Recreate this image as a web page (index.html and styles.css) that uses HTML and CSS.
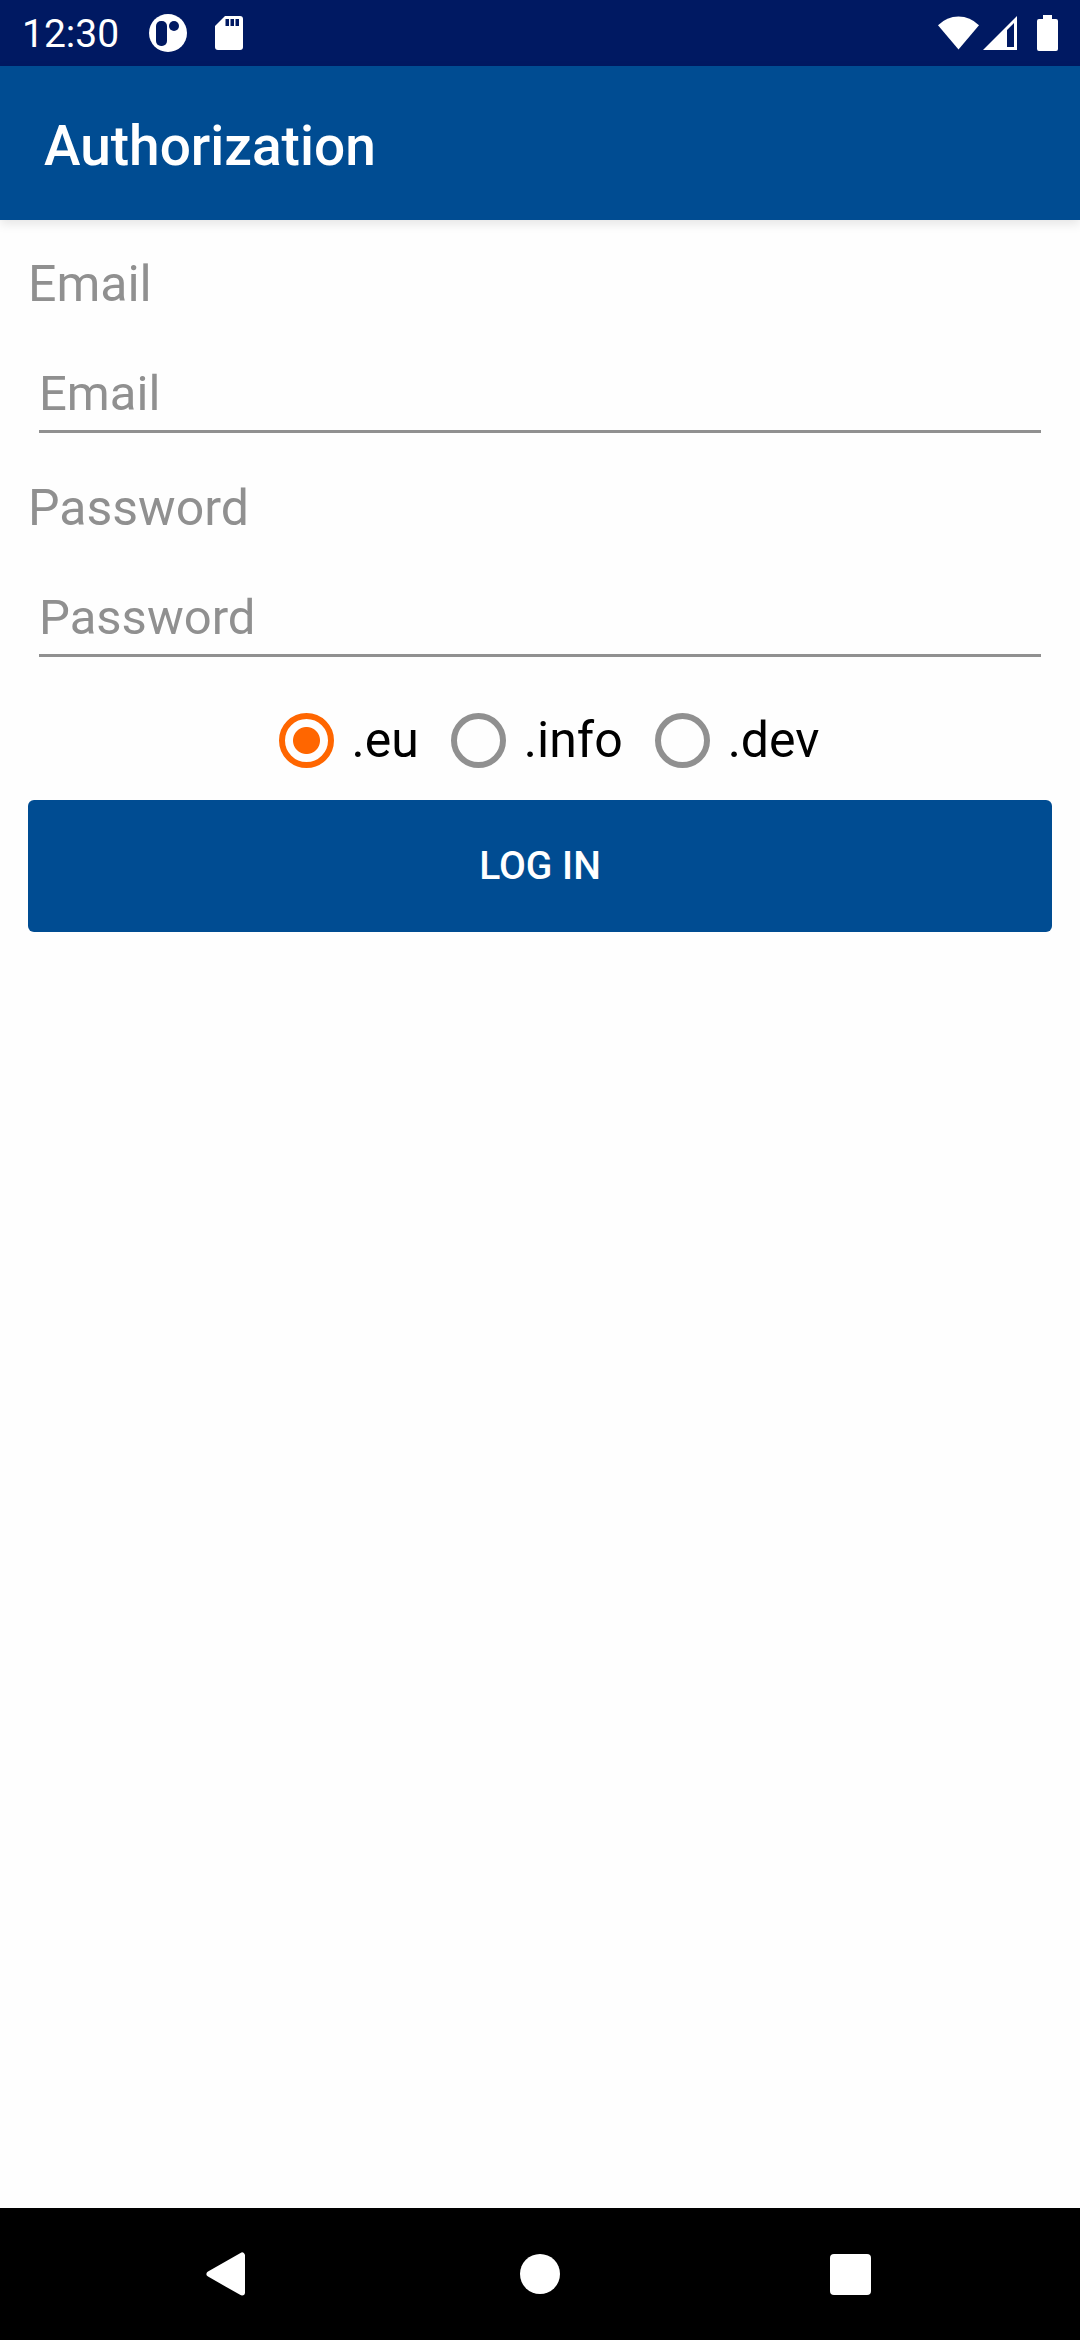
FILE: index.html
```html
<!DOCTYPE html>
<html lang="en">

<head>
    <meta charset="UTF-8">
    <meta name="viewport" content="width=device-width, initial-scale=1.0">
    <title>Authorization</title>
    <link rel="stylesheet" href="styles.css">
</head>

<body>
    <div class="status-bar">
        <div class="status-left">
            <span class="clock">12:30</span>
            <svg class="app-icon" width="38" height="38" viewBox="0 0 38 38">
                <circle cx="19" cy="19" r="19" fill="#fff"/>
                <rect x="7" y="7" width="11" height="25" rx="5" fill="#001962"/>
                <circle cx="25" cy="12" r="5" fill="#001962"/>
            </svg>
            <svg width="28" height="36" viewBox="0 0 28 36">
                <path d="M10 1H25Q28 1 28 4V32Q28 35 25 35H3Q0 35 0 32V11Z" fill="#fff"/>
                <path d="M10.500 4h3.500v7h-3.500zM15.500 4h3.500v7h-3.500zM20.500 4h3.500v7h-3.500z" fill="#001962"/>
            </svg>
        </div>
        <div class="status-right">
            <svg width="41" height="36" viewBox="0 0 42 36">
                <path d="M0 10Q9 1 21 1T42 10L21 35Z" fill="#fff"/>
            </svg>
            <svg width="34" height="36" viewBox="0 0 34 36">
                <path d="M0 35L34 1V35ZM24 15V32H31V8Z" fill="#fff" fill-rule="evenodd"/>
            </svg>
            <svg class="battery" width="21" height="36" viewBox="0 0 21 36">
                <path d="M6 0H15V4H19Q21 4 21 6V34Q21 36 19 36H2Q0 36 0 34V6Q0 4 2 4H6Z" fill="#fff"/>
            </svg>
        </div>
    </div>

    <header class="toolbar">
        <h1>Authorization</h1>
    </header>

    <main>
        <form class="login-form">
            <label class="field-label" for="email">Email</label>
            <input class="field" type="email" id="email" placeholder="Email">

            <label class="field-label" for="password">Password</label>
            <input class="field" type="password" id="password" placeholder="Password">

            <div class="domains">
                <label class="domain"><input type="radio" name="domain" value="eu" checked>.eu</label>
                <label class="domain"><input type="radio" name="domain" value="info">.info</label>
                <label class="domain"><input type="radio" name="domain" value="dev">.dev</label>
            </div>

            <button class="login-button" type="button">LOG IN</button>
        </form>
    </main>

    <nav class="nav-bar">
        <button type="button" aria-label="Back">
            <svg width="46" height="46" viewBox="0 0 46 46">
                <path d="M3.500 23L36 4.500V41.500Z" fill="#fff" stroke="#fff" stroke-width="6" stroke-linejoin="round"/>
            </svg>
        </button>
        <button type="button" aria-label="Home">
            <svg width="46" height="46" viewBox="0 0 46 46">
                <circle cx="23" cy="23" r="20" fill="#fff"/>
            </svg>
        </button>
        <button type="button" aria-label="Recent apps">
            <svg width="46" height="46" viewBox="0 0 46 46">
                <rect x="2" y="3" width="41" height="41" rx="4" fill="#fff"/>
            </svg>
        </button>
    </nav>
</body>

</html>
```

FILE: styles.css
```css
* {
    box-sizing: border-box;
}

body {
    font-family: Roboto, sans-serif;
    margin: 0;
    min-height: 100vh;
    display: flex;
    flex-direction: column;
    background-color: #fefefe;
}

svg {
    display: block;
}

/* Status bar */
.status-bar {
    display: flex;
    justify-content: space-between;
    align-items: center;
    height: 66px;
    padding: 0 22px;
    background-color: #001962;
    color: #fff;
}

.status-left,
.status-right {
    display: flex;
    align-items: center;
}

.clock {
    padding-top: 2px;
    font-size: 39px;
    line-height: 48px;
}

.app-icon {
    margin: 0 28px 0 30px;
}

.status-right {
    gap: 4px;
}

.battery {
    margin-left: 16px;
}

/* Toolbar */
.toolbar {
    display: flex;
    align-items: center;
    height: 154px;
    padding: 6px 44px 0;
    background-color: #004c92;
    box-shadow: 0 4px 10px rgba(0, 0, 0, 0.1);
}

.toolbar h1 {
    margin: 0;
    color: #fff;
    font-size: 55px;
    font-weight: 500;
    line-height: 64px;
}

/* Form */
main {
    flex: 1;
    padding: 28px;
}

.login-form {
    display: flex;
    flex-direction: column;
}

.field-label {
    margin-top: 6px;
    color: #909090;
    font-size: 50px;
    line-height: 60px;
}

.field {
    height: 109px;
    margin: 10px 11px 39px;
    padding: 33px 0 0;
    border: none;
    border-bottom: 3px solid #909090;
    border-radius: 0;
    outline: none;
    background: none;
    color: #000;
    font-family: inherit;
    font-size: 49px;
}

.field::placeholder {
    color: #909090;
    opacity: 1;
}

.domains {
    display: flex;
    justify-content: center;
    gap: 32px;
    margin-top: 14px;
    padding-left: 18px;
}

.domain {
    display: flex;
    align-items: center;
    gap: 18px;
    color: #000;
    font-size: 50px;
    line-height: 60px;
}

.domain input {
    appearance: none;
    width: 55px;
    height: 55px;
    margin: 0;
    border: 6px solid #909090;
    border-radius: 50%;
}

.domain input:checked {
    border-color: #ff6600;
    background: radial-gradient(circle, #ff6600 13px, transparent 14px);
}

.login-button {
    height: 132px;
    margin-top: 30px;
    border: none;
    border-radius: 6px;
    background-color: #004c92;
    color: #fff;
    font-family: inherit;
    font-size: 39px;
    font-weight: 500;
}

/* Navigation bar */
.nav-bar {
    display: flex;
    height: 132px;
    padding: 0 73px;
    background-color: #000;
}

.nav-bar button {
    flex: 1;
    display: flex;
    justify-content: center;
    align-items: center;
    padding: 0;
    border: none;
    background: none;
}
```
